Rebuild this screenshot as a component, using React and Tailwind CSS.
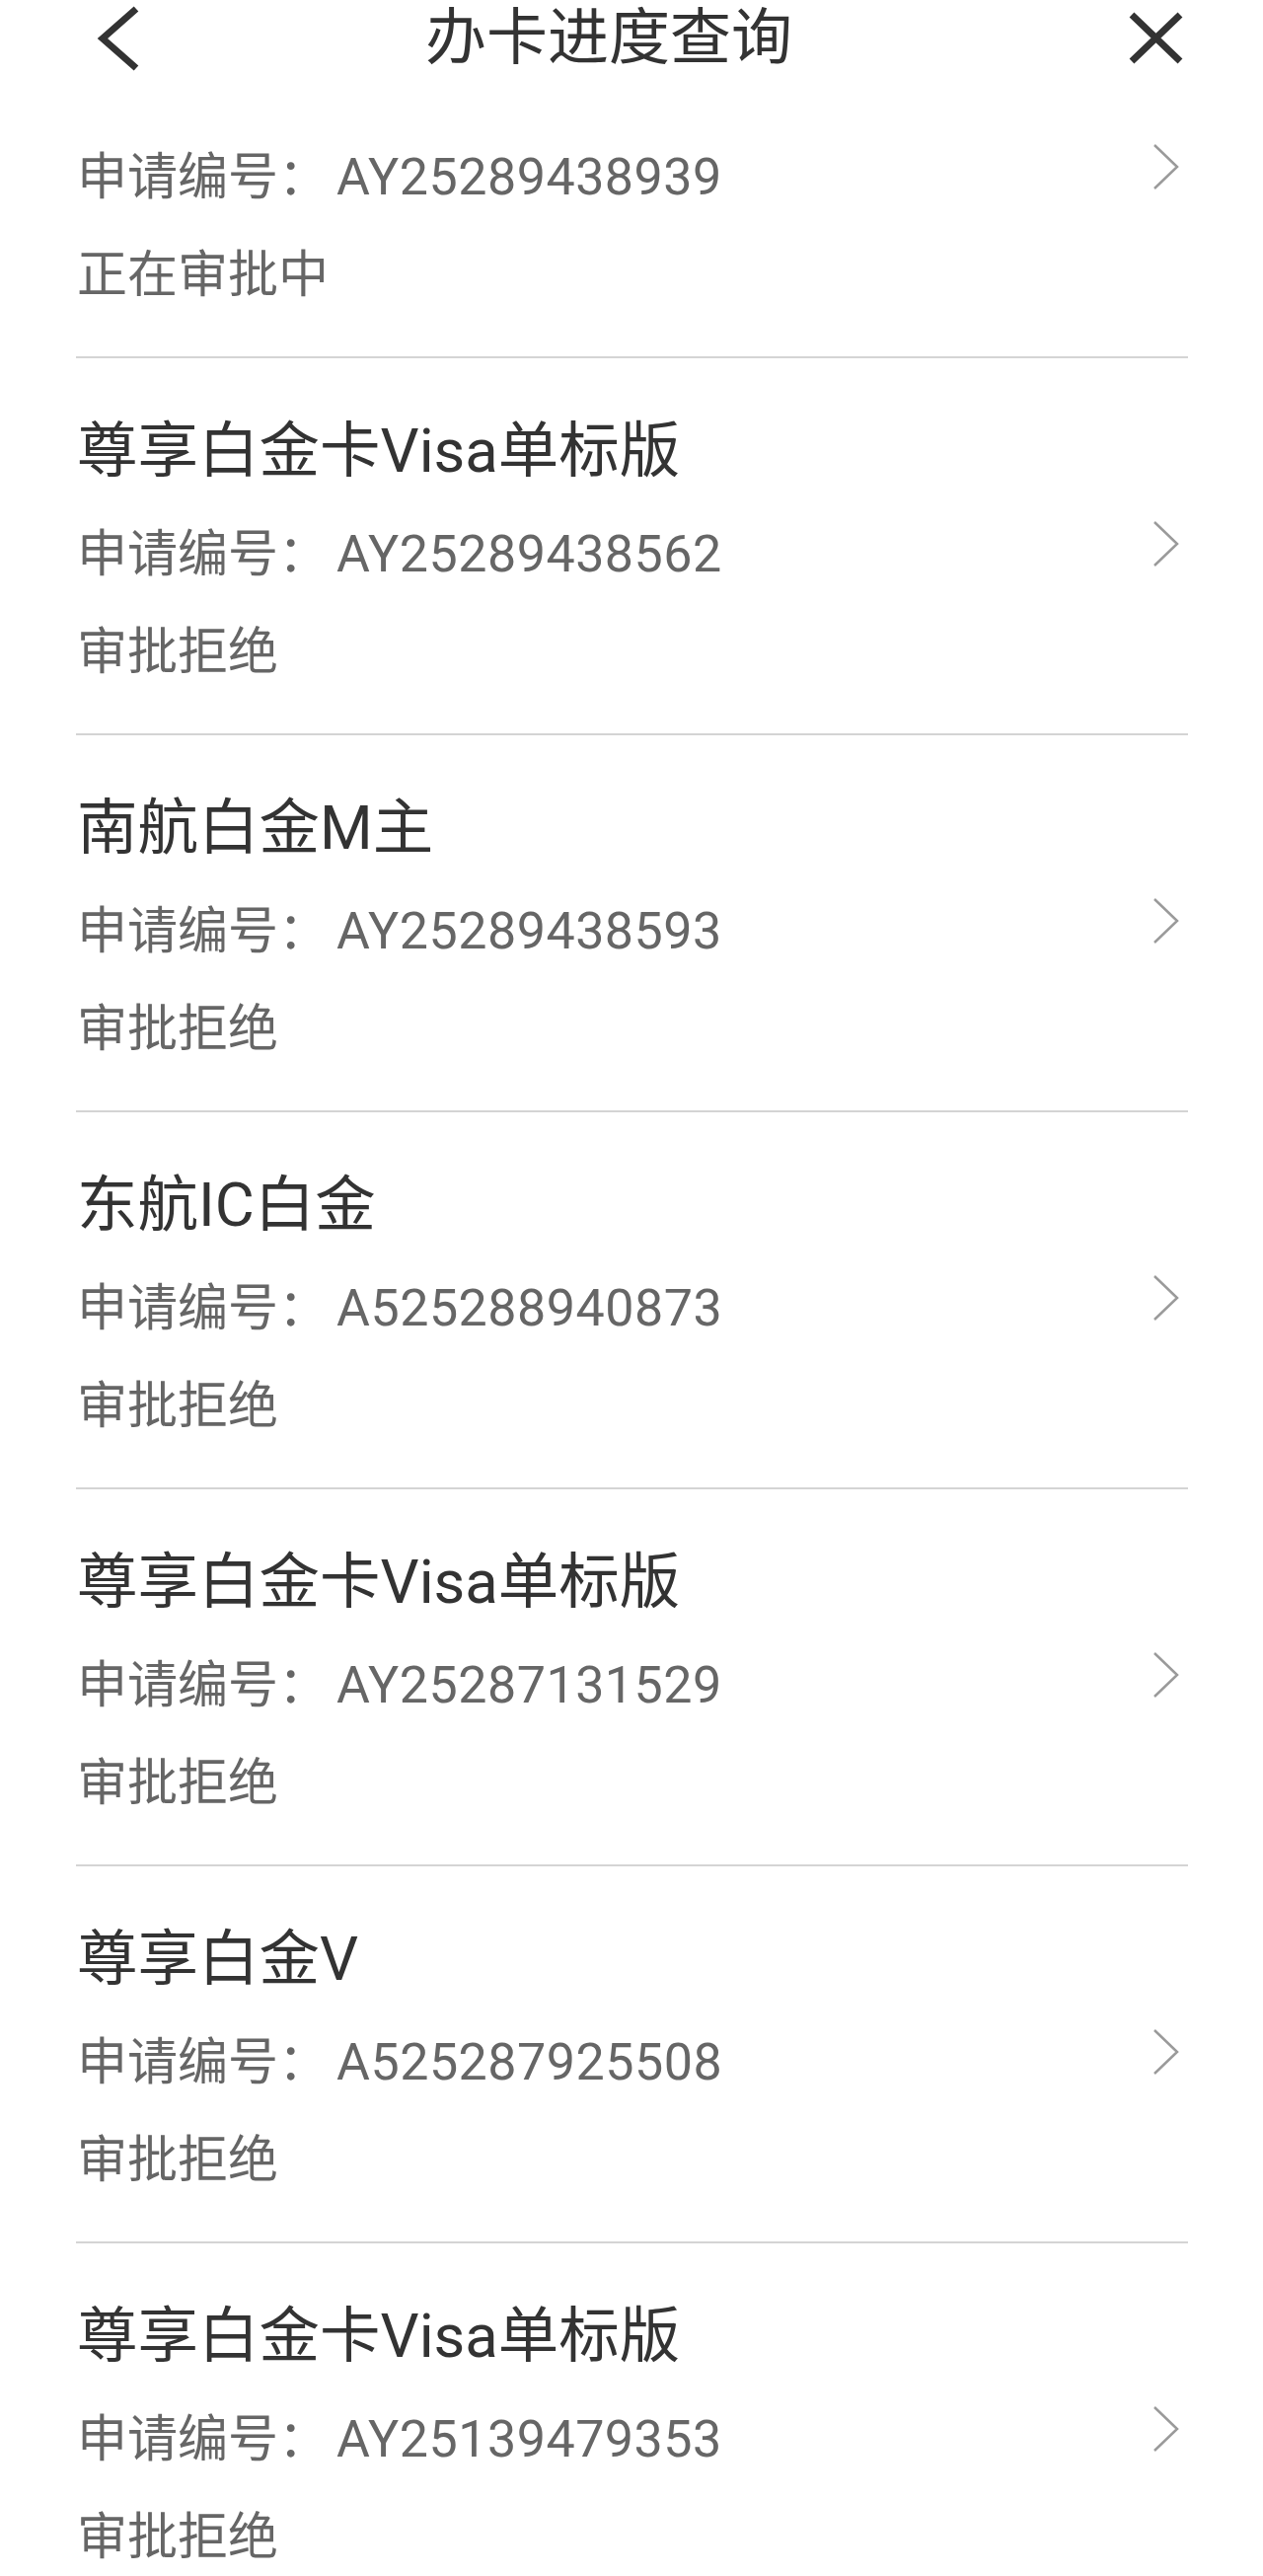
const items = [
  { title: null, no: "AY25289438939", status: "正在审批中" },
  { title: "尊享白金卡Visa单标版", no: "AY25289438562", status: "审批拒绝" },
  { title: "南航白金M主", no: "AY25289438593", status: "审批拒绝" },
  { title: "东航IC白金", no: "A525288940873", status: "审批拒绝" },
  { title: "尊享白金卡Visa单标版", no: "AY25287131529", status: "审批拒绝" },
  { title: "尊享白金V", no: "A525287925508", status: "审批拒绝" },
  { title: "尊享白金卡Visa单标版", no: "AY25139479353", status: "审批拒绝" },
];

function Row({ item }) {
  return (
    <div className={`border-b-2 border-[#d4d4d4] pl-[1px] pb-[42px] ${item.title ? "pt-[54px]" : "pt-[62px]"}`}>
      {item.title && (
        <div className="text-[61.5px] leading-[80px] text-[#333333]">{item.title}</div>
      )}
      <div className={`flex items-start justify-between text-[51px] leading-[80px] text-[#666666] ${item.title ? "mt-[25px]" : ""}`}>
        <div className="flex">
          <span>申请编号：</span>
          <span className="ml-2 text-[52px] tracking-[0.5px]">{item.no}</span>
        </div>
        <svg width="28" height="48" viewBox="0 0 28 48" className="mt-[5px] mr-[9px]">
          <polyline points="3,2 26,24 3,46" fill="none" stroke="#9a9a9a" strokeWidth="2.5" />
        </svg>
      </div>
      <div className="mt-[19px] text-[51px] leading-[80px] text-[#666666]">{item.status}</div>
    </div>
  );
}

export default function App() {
  return (
    <div className="h-[2610px] overflow-hidden bg-white font-['Roboto','Noto_Sans_CJK_SC',sans-serif]">
      <div className="flex h-[78px] items-center">
        <svg width="48" height="72" viewBox="0 0 48 72" className="ml-[98px]">
          <polyline points="40,6 6,36 40,66" fill="none" stroke="#333333" strokeWidth="7" />
        </svg>
        <div className="ml-[285px] text-[62px] leading-[78px] text-[#333333]">办卡进度查询</div>
        <svg width="64" height="62" viewBox="0 0 64 62" className="ml-auto mr-[76px]">
          <path d="M7 7 L56 54 M56 7 L7 54" fill="none" stroke="#333333" strokeWidth="7" />
        </svg>
      </div>
      <div className="ml-[77px] mr-[76px]">
        {items.map((it, i) => (
          <Row key={i} item={it} />
        ))}
      </div>
    </div>
  );
}
